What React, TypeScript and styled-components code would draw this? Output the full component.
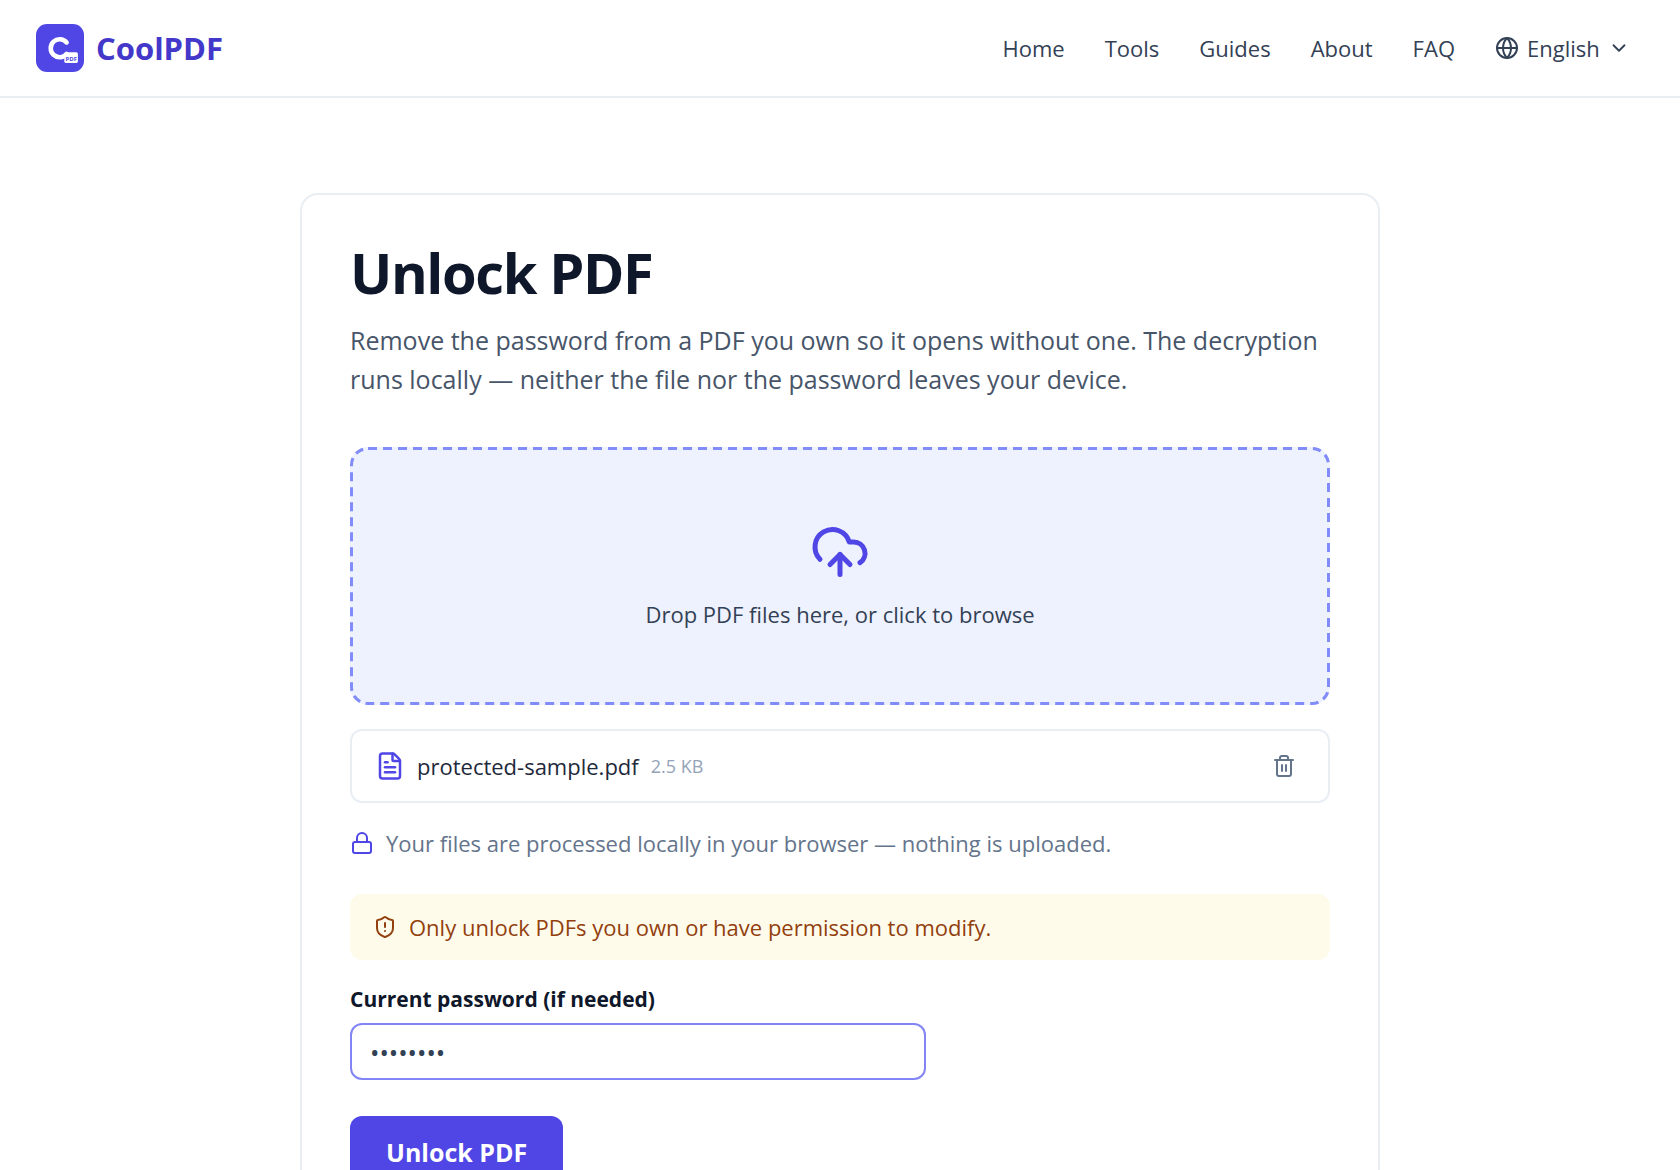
import React, { useState } from "react";
import styled, { createGlobalStyle } from "styled-components";
import {
  ChevronDown,
  CloudUpload,
  FileText,
  Globe,
  Lock,
  ShieldAlert,
  Trash2,
} from "lucide-react";

const color = {
  brand: "#4f46e5",
  brandDark: "#4338ca",
  ink: "#0f172a",
  strong: "#1e293b",
  text: "#334155",
  muted: "#475569",
  subtle: "#64748b",
  faint: "#94a3b8",
  line: "#e9eef4",
};

const GlobalStyle = createGlobalStyle`
  *, *::before, *::after { box-sizing: border-box; }
  body {
    margin: 0;
    background: #ffffff;
    color: ${color.ink};
    font-family: "Open Sans", "Noto Sans", sans-serif;
    font-size: 22px;
    line-height: 32px;
  }
  button, input, select { font: inherit; }
`;

const Header = styled.header`
  display: flex;
  align-items: center;
  justify-content: space-between;
  height: 98px;
  padding: 0 50px 0 36px;
  border-bottom: 2px solid ${color.line};
`;

const Brand = styled.a`
  display: flex;
  align-items: center;
  gap: 12px;
  color: ${color.brandDark};
  font-size: 31px;
  font-weight: 700;
  text-decoration: none;
`;

const Nav = styled.nav`
  display: flex;
  align-items: center;
  gap: 40px;
  color: ${color.text};
`;

const NavLink = styled.a`
  color: inherit;
  text-decoration: none;
`;

const Language = styled.label`
  display: flex;
  align-items: center;
  gap: 8px;
`;

const LanguageSelect = styled.select`
  appearance: none;
  padding: 0;
  border: 0;
  background: transparent;
  color: inherit;
`;

const Main = styled.main`
  max-width: 1080px;
  margin: 0 auto;
  padding: 95px 0;
`;

const Card = styled.section`
  padding: 48px;
  border: 2px solid ${color.line};
  border-radius: 18px;
`;

const Title = styled.h1`
  margin: 0;
  font-size: 56px;
  line-height: 58px;
  font-weight: 700;
  letter-spacing: -0.025em;
`;

const Lead = styled.p`
  margin: 20px 0 48px;
  color: ${color.muted};
  font-size: 25px;
  line-height: 39px;
`;

const DropZone = styled.button`
  position: relative;
  display: flex;
  flex-direction: column;
  align-items: center;
  gap: 16px;
  width: 100%;
  padding: 75px 24px;
  border: 0;
  border-radius: 18px;
  overflow: hidden;
  background: #eef2ff;
  color: ${color.text};
  cursor: pointer;

  svg { color: ${color.brand}; }
`;

/* The outer half of the stroke is clipped by the zone, so 3px of it shows. */
const DashedOutline = styled.svg`
  position: absolute;
  inset: 0;
  width: 100%;
  height: 100%;
  pointer-events: none;
`;

const FileRow = styled.div`
  display: flex;
  align-items: center;
  gap: 12px;
  height: 74px;
  margin-top: 24px;
  padding: 0 23px;
  border: 2px solid ${color.line};
  border-radius: 12px;
  color: ${color.strong};

  > svg { color: ${color.brand}; }
`;

const FileSize = styled.span`
  flex: 1;
  color: ${color.faint};
  font-size: 18px;
`;

const IconButton = styled.button`
  display: flex;
  padding: 9px;
  border: 0;
  background: transparent;
  color: ${color.subtle};
  cursor: pointer;
`;

const Privacy = styled.p`
  display: flex;
  align-items: center;
  gap: 12px;
  margin: 24px 0 35px;
  color: ${color.subtle};

  svg { color: ${color.brand}; }
`;

const Notice = styled.div`
  display: flex;
  align-items: center;
  gap: 12px;
  padding: 17px 23px;
  border-radius: 12px;
  background: #fffbeb;
  color: #92400e;
`;

const Field = styled.div`
  display: flex;
  flex-direction: column;
  gap: 8px;
  margin: 23px 0 36px;
`;

const FieldLabel = styled.label`
  font-size: 21px;
  font-weight: 700;
`;

const PasswordInput = styled.input`
  width: 100%;
  max-width: 576px;
  height: 57px;
  padding: 0 18px;
  border: 2px solid #8385f4;
  border-radius: 12px;
  outline: none;
  background: #ffffff;
  color: ${color.text};
  font-size: 25px;
`;

const PrimaryButton = styled.button`
  padding: 20px 36px;
  border: 0;
  border-radius: 12px;
  background: ${color.brand};
  color: #ffffff;
  font-size: 25px;
  font-weight: 700;
  cursor: pointer;
`;

const LogoText = styled.text`
  font-family: "Open Sans", sans-serif;
  font-size: 6px;
  font-weight: 700;
`;

function Logo() {
  return (
    <svg width="48" height="48" viewBox="0 0 48 48" aria-hidden="true">
      <rect width="48" height="48" rx="11" fill={color.brand} />
      <path
        d="M30.6 18.4A9 9 0 1 0 30.6 30"
        fill="none"
        stroke="#ffffff"
        strokeWidth="4.6"
        strokeLinecap="round"
      />
      <rect x="28.3" y="28.3" width="13.6" height="10.6" rx="1.6" fill="#ffffff" />
      <LogoText x="35.2" y="36.8" textAnchor="middle" fill={color.brand}>
        PDF
      </LogoText>
    </svg>
  );
}

const links = ["Home", "Tools", "Guides", "About", "FAQ"];

export default function App() {
  const [password, setPassword] = useState("password");

  return (
    <>
      <GlobalStyle />
      <Header>
        <Brand href="#home">
          <Logo />
          CoolPDF
        </Brand>
        <Nav>
          {links.map((name) => (
            <NavLink key={name} href={`#${name.toLowerCase()}`}>
              {name}
            </NavLink>
          ))}
          <Language>
            <Globe size={24} />
            <LanguageSelect aria-label="Language">
              <option>English</option>
            </LanguageSelect>
            <ChevronDown size={22} />
          </Language>
        </Nav>
      </Header>
      <Main>
        <Card>
          <Title>Unlock PDF</Title>
          <Lead>
            Remove the password from a PDF you own so it opens without one. The
            decryption runs locally — neither the file nor the password leaves
            your device.
          </Lead>
          <DropZone type="button">
            <DashedOutline aria-hidden="true">
              <rect
                width="100%"
                height="100%"
                rx="18"
                fill="none"
                stroke="#818cf8"
                strokeWidth="6"
                strokeDasharray="9 6"
              />
            </DashedOutline>
            <CloudUpload size={60} />
            Drop PDF files here, or click to browse
          </DropZone>
          <FileRow>
            <FileText size={30} />
            <span>protected-sample.pdf</span>
            <FileSize>2.5 KB</FileSize>
            <IconButton type="button" aria-label="Remove file">
              <Trash2 size={24} />
            </IconButton>
          </FileRow>
          <Privacy>
            <Lock size={24} />
            Your files are processed locally in your browser — nothing is
            uploaded.
          </Privacy>
          <Notice>
            <ShieldAlert size={24} />
            Only unlock PDFs you own or have permission to modify.
          </Notice>
          <Field>
            <FieldLabel htmlFor="password">
              Current password (if needed)
            </FieldLabel>
            <PasswordInput
              id="password"
              type="password"
              value={password}
              onChange={(event) => setPassword(event.target.value)}
            />
          </Field>
          <PrimaryButton type="button">Unlock PDF</PrimaryButton>
        </Card>
      </Main>
    </>
  );
}
